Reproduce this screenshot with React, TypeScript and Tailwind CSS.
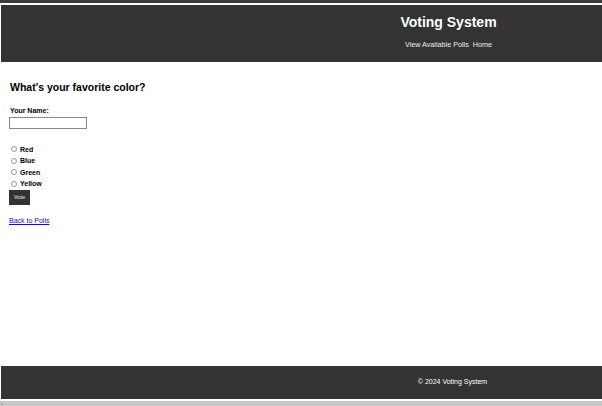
export default function App() {
  return (
    <div className="w-[602px] h-[406px] bg-white flex flex-col overflow-hidden" style={{ fontFamily: '"Liberation Sans", Arial, sans-serif' }}>
      <div className="h-[3px] bg-[#3c3c3c]" />
      <div className="h-[2px] bg-white" />
      <header className="h-[57px] ml-[1px] bg-[#333333] text-white flex flex-col items-center pl-[294px]">
        <h1 className="text-[14px] font-bold leading-none mt-[10px]">Voting System</h1>
        <nav className="flex gap-[4px] text-[7.2px] mt-[12px] leading-none text-[#eeeeee]">
          <a>View Available Polls</a>
          <a>Home</a>
        </nav>
      </header>
      <main className="flex-1 px-[10px] pt-[20px] text-black">
        <h2 className="text-[10.5px] font-bold leading-none">What's your favorite color?</h2>
        <div className="mt-[14px] text-[7px] font-bold leading-none">Your Name:</div>
        <div className="mt-[3px] -ml-[1px] w-[78px] h-[12px] border border-[#888] bg-white" />
        <div className="mt-[17px] flex flex-col gap-[4px]">
          {['Red', 'Blue', 'Green', 'Yellow'].map((c) => (
            <div key={c} className="flex items-center gap-[3px] h-[7.5px] ml-[1px]">
              <span className="w-[6px] h-[6px] rounded-full border border-[#999] bg-white" />
              <span className="text-[7px] font-bold leading-none">{c}</span>
            </div>
          ))}
        </div>
        <button className="mt-[2px] -ml-[1px] w-[21px] h-[15px] bg-[#333] text-[#eee] text-[5.5px] flex items-center justify-center">Vote</button>
        <a className="block mt-[12px] -ml-[1px] text-[7px] leading-none text-[#1a0dab] underline">Back to Polls</a>
      </main>
      <footer className="h-[33px] ml-[1px] bg-[#333333] text-white text-[7px] flex items-center justify-center pl-[302px]">
        © 2024 Voting System
      </footer>
      <div className="h-[2px] bg-white" />
      <div className="h-[5px] bg-[#c8c8c8] flex items-center text-[5px] text-[#555] pl-[1px] leading-none">‹</div>
    </div>
  );
}
